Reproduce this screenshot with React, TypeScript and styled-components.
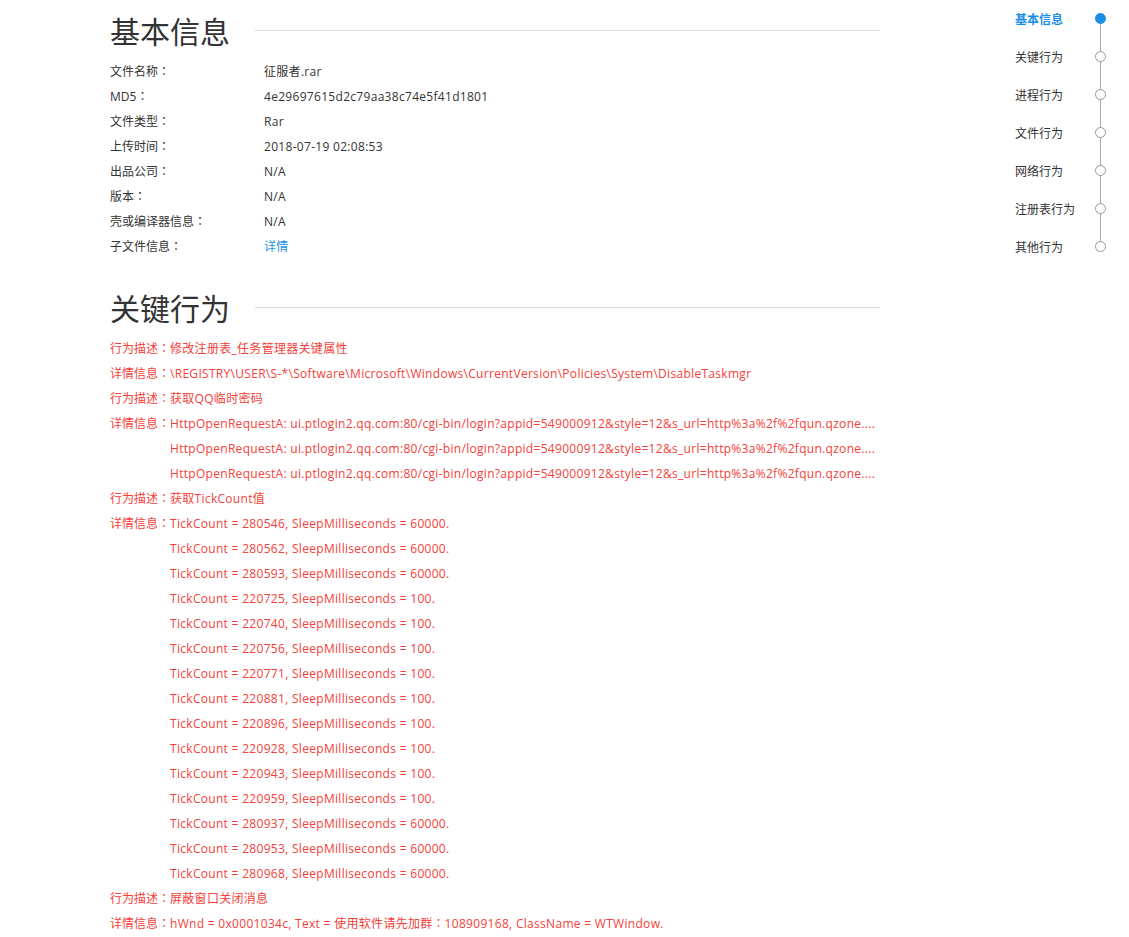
import React from "react";
import styled, { createGlobalStyle } from "styled-components";

const GlobalStyle = createGlobalStyle`
  body {
    margin: 0;
    background: #fff;
    font-family: "Open Sans", "Noto Sans CJK SC", sans-serif;
    font-size: 12px;
    letter-spacing: 0.3px;
    color: #333;
  }
`;

const Page = styled.div`
  display: flex;
  justify-content: space-between;
  padding-left: 110px;
  padding-right: 23px;
`;

const Main = styled.div`
  width: 770px;
  padding-top: 10px;
`;

const Section = styled.section`
  margin-bottom: 28px;
`;

const Heading = styled.div`
  display: flex;
  align-items: center;
  gap: 25px;
  height: 40px;
  margin-bottom: 9px;
`;

const HeadingText = styled.h2`
  margin: 0;
  font-family: "Noto Sans CJK SC", sans-serif;
  font-size: 30px;
  font-weight: 400;
  letter-spacing: 0;
  line-height: 40px;
  color: #333;
  white-space: nowrap;
`;

const HeadingRule = styled.div`
  flex: 1;
  height: 1px;
  background: #ddd;
`;

const Colon = styled.span`
  font-family: "Noto Sans CJK TC", sans-serif;
  letter-spacing: 0;
  line-height: 1;
`;

const Label = styled.span`
  display: block;
  height: 25px;
  white-space: nowrap;
  letter-spacing: 0;
`;

const InfoRow = styled.div`
  display: grid;
  grid-template-columns: 154px 1fr;
  line-height: 25px;
  height: 25px;
`;

const InfoValue = styled.span<{ $link?: boolean }>`
  color: ${(p) => (p.$link ? "#1a8fe8" : "#333")};
`;

const Behavior = styled.div`
  display: grid;
  grid-template-columns: 60px 1fr;
  line-height: 25px;
  color: #f5413a;
`;

const BehaviorLines = styled.div`
  display: flex;
  flex-direction: column;
  white-space: nowrap;
`;

const BehaviorLine = styled.span`
  display: block;
  height: 25px;
`;

const Nav = styled.nav`
  position: relative;
  padding-top: 6px;
  width: 91px;
`;

const NavTrack = styled.div`
  position: absolute;
  left: 85px;
  top: 18px;
  height: 228px;
  width: 1px;
  background: #aaa;
`;

const NavItem = styled.div<{ $active?: boolean }>`
  position: relative;
  display: flex;
  justify-content: space-between;
  align-items: center;
  height: 24px;
  margin-bottom: 14px;
  letter-spacing: 0;
  color: ${(p) => (p.$active ? "#1a8fe8" : "#333")};
  font-weight: ${(p) => (p.$active ? 700 : 400)};
  font-family: "Noto Sans CJK SC", sans-serif;
`;

const NavDot = styled.span<{ $active?: boolean }>`
  box-sizing: border-box;
  width: 11px;
  height: 11px;
  border-radius: 50%;
  border: 1px solid ${(p) => (p.$active ? "#1a8fe8" : "#999")};
  background: ${(p) => (p.$active ? "#1a8fe8" : "#fff")};
`;

const info: [string, string, boolean?][] = [
  ["文件名称", "征服者.rar"],
  ["MD5", "4e29697615d2c79aa38c74e5f41d1801"],
  ["文件类型", "Rar"],
  ["上传时间", "2018-07-19 02:08:53"],
  ["出品公司", "N/A"],
  ["版本", "N/A"],
  ["壳或编译器信息", "N/A"],
  ["子文件信息", "详情", true],
];

const http =
  "HttpOpenRequestA: ui.ptlogin2.qq.com:80/cgi-bin/login?appid=549000912&style=12&s_url=http%3a%2f%2fqun.qzone....";

const ticks = [
  ["280546", "60000"],
  ["280562", "60000"],
  ["280593", "60000"],
  ["220725", "100"],
  ["220740", "100"],
  ["220756", "100"],
  ["220771", "100"],
  ["220881", "100"],
  ["220896", "100"],
  ["220928", "100"],
  ["220943", "100"],
  ["220959", "100"],
  ["280937", "60000"],
  ["280953", "60000"],
  ["280968", "60000"],
].map(([t, s]) => `TickCount = ${t}, SleepMilliseconds = ${s}.`);

const behaviors: { desc: string; details: React.ReactNode[] }[] = [
  {
    desc: "修改注册表_任务管理器关键属性",
    details: [
      "\\REGISTRY\\USER\\S-*\\Software\\Microsoft\\Windows\\CurrentVersion\\Policies\\System\\DisableTaskmgr",
    ],
  },
  { desc: "获取QQ临时密码", details: [http, http, http] },
  { desc: "获取TickCount值", details: ticks },
  {
    desc: "屏蔽窗口关闭消息",
    details: [
      <>
        hWnd = 0x0001034c, Text = 使用软件请先加群<Colon>：</Colon>108909168, ClassName = WTWindow.
      </>,
    ],
  },
];

const navItems = ["基本信息", "关键行为", "进程行为", "文件行为", "网络行为", "注册表行为", "其他行为"];

export default function App() {
  return (
    <>
      <GlobalStyle />
      <Page>
        <Main>
          <Section>
            <Heading>
              <HeadingText>基本信息</HeadingText>
              <HeadingRule />
            </Heading>
            {info.map(([label, value, link]) => (
              <InfoRow key={label}>
                <Label>
                  {label}
                  <Colon>：</Colon>
                </Label>
                <InfoValue $link={link}>{value}</InfoValue>
              </InfoRow>
            ))}
          </Section>
          <Section>
            <Heading>
              <HeadingText>关键行为</HeadingText>
              <HeadingRule />
            </Heading>
            {behaviors.map((b) => (
              <React.Fragment key={b.desc}>
                <Behavior>
                  <Label>
                    行为描述<Colon>：</Colon>
                  </Label>
                  <BehaviorLines>
                    <BehaviorLine>{b.desc}</BehaviorLine>
                  </BehaviorLines>
                </Behavior>
                <Behavior>
                  <Label>
                    详情信息<Colon>：</Colon>
                  </Label>
                  <BehaviorLines>
                    {b.details.map((d, i) => (
                      <BehaviorLine key={i}>{d}</BehaviorLine>
                    ))}
                  </BehaviorLines>
                </Behavior>
              </React.Fragment>
            ))}
          </Section>
        </Main>
        <Nav>
          <NavTrack />
          {navItems.map((n, i) => (
            <NavItem key={n} $active={i === 0}>
              <span>{n}</span>
              <NavDot $active={i === 0} />
            </NavItem>
          ))}
        </Nav>
      </Page>
    </>
  );
}
